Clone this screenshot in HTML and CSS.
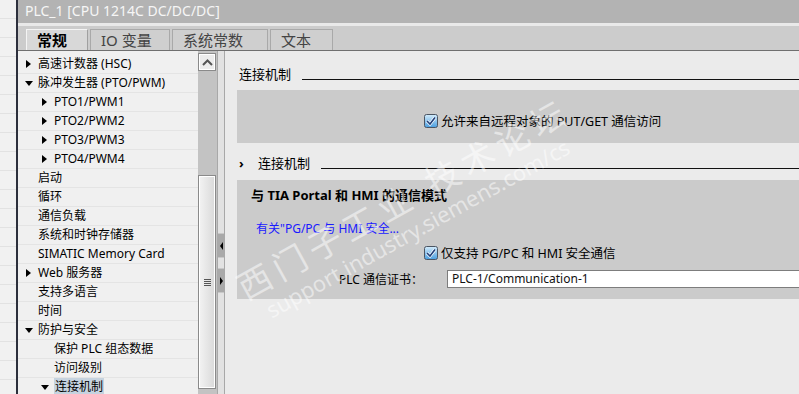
FILE: index.html
```html
<!DOCTYPE html>
<html lang="zh-CN">
<head>
  <meta charset="UTF-8">
  <title>PLC_1 属性</title>
  <link rel="stylesheet" href="styles.css">
</head>
<body>
  <div class="app">
    <div class="side-strip"></div>
    <div class="divider"></div>
    <div class="main">
      <div class="titlebar">PLC_1 [CPU 1214C DC/DC/DC]</div>
      <div class="tabbar">
        <div class="tab active">常规</div>
        <div class="tab">IO 变量</div>
        <div class="tab">系统常数</div>
        <div class="tab">文本</div>
      </div>
      <div class="body">
        <div class="tree">
          <div class="row l0"><span class="arrow right"></span>高速计数器 (HSC)</div>
          <div class="row l0"><span class="arrow down"></span>脉冲发生器 (PTO/PWM)</div>
          <div class="row l1"><span class="arrow right"></span>PTO1/PWM1</div>
          <div class="row l1"><span class="arrow right"></span>PTO2/PWM2</div>
          <div class="row l1"><span class="arrow right"></span>PTO3/PWM3</div>
          <div class="row l1"><span class="arrow right"></span>PTO4/PWM4</div>
          <div class="row l0"><span class="arrow"></span>启动</div>
          <div class="row l0"><span class="arrow"></span>循环</div>
          <div class="row l0"><span class="arrow"></span>通信负载</div>
          <div class="row l0"><span class="arrow"></span>系统和时钟存储器</div>
          <div class="row l0"><span class="arrow"></span>SIMATIC Memory Card</div>
          <div class="row l0"><span class="arrow right"></span>Web 服务器</div>
          <div class="row l0"><span class="arrow"></span>支持多语言</div>
          <div class="row l0"><span class="arrow"></span>时间</div>
          <div class="row l0"><span class="arrow down"></span>防护与安全</div>
          <div class="row l1"><span class="arrow"></span>保护 PLC 组态数据</div>
          <div class="row l1"><span class="arrow"></span>访问级别</div>
          <div class="row l1"><span class="arrow down"></span><span class="selected">连接机制</span></div>
        </div>

        <div class="scrollbar">
          <div class="scroll-up">
            <svg width="11" height="7" viewBox="0 0 11 7"><path d="M1 6 L5.5 1.5 L10 6" fill="none" stroke="#555" stroke-width="2"/></svg>
          </div>
          <div class="scroll-track"></div>
          <div class="scroll-thumb">
            <div class="grip"><span></span><span></span><span></span><span></span></div>
          </div>
        </div>

        <div class="splitter">
          <div class="split-btn"><span class="tri-left"></span></div>
          <div class="split-btn"><span class="tri-right"></span></div>
        </div>

        <div class="content">
          <div class="section-head">
            <span class="head-text">连接机制</span>
            <span class="head-line"></span>
          </div>
          <div class="panel panel-putget">
            <div class="check-row">
              <span class="checkbox">
                <svg width="14" height="14" viewBox="0 0 14 14">
                  <defs>
                    <linearGradient id="cb1" x1="0" y1="0" x2="0" y2="1">
                      <stop offset="0" stop-color="#d4ecfb"/>
                      <stop offset="1" stop-color="#4a9ee0"/>
                    </linearGradient>
                  </defs>
                  <rect x="0.5" y="0.5" width="13" height="13" rx="2" fill="url(#cb1)" stroke="#4b5563"/>
                  <path d="M3 7 L6 10 L11 3.5" fill="none" stroke="#fff" stroke-width="3"/>
                  <path d="M3 7 L6 10 L11 3.5" fill="none" stroke="#1f3f7a" stroke-width="1.6"/>
                </svg>
              </span>
              <span>允许来自远程对象的 PUT/GET 通信访问</span>
            </div>
          </div>

          <div class="section-head sub">
            <span class="chevron">›</span>
            <span class="head-text">连接机制</span>
            <span class="head-line"></span>
          </div>
          <div class="panel panel-hmi">
            <div class="panel-title">与 TIA Portal 和 HMI 的通信模式</div>
            <div class="link">有关"PG/PC 与 HMI 安全...</div>
            <div class="check-row">
              <span class="checkbox">
                <svg width="14" height="14" viewBox="0 0 14 14">
                  <defs>
                    <linearGradient id="cb2" x1="0" y1="0" x2="0" y2="1">
                      <stop offset="0" stop-color="#d4ecfb"/>
                      <stop offset="1" stop-color="#4a9ee0"/>
                    </linearGradient>
                  </defs>
                  <rect x="0.5" y="0.5" width="13" height="13" rx="2" fill="url(#cb2)" stroke="#4b5563"/>
                  <path d="M3 7 L6 10 L11 3.5" fill="none" stroke="#fff" stroke-width="3"/>
                  <path d="M3 7 L6 10 L11 3.5" fill="none" stroke="#1f3f7a" stroke-width="1.6"/>
                </svg>
              </span>
              <span>仅支持 PG/PC 和 HMI 安全通信</span>
            </div>
            <div class="cert-row">
              <label class="cert-label">PLC 通信证书：</label>
              <div class="cert-input">PLC-1/Communication-1</div>
            </div>
          </div>

          <div class="watermark">
            <div class="wm-big">西门子工业 技术论坛</div>
            <div class="wm-small">support.industry.siemens.com/cs</div>
          </div>
        </div>
      </div>
    </div>
  </div>
</body>
</html>
```

FILE: styles.css
```css
body {
  margin: 0;
  padding: 0;
  width: 799px;
  height: 394px;
  overflow: hidden;
  background: #ebebeb;
  font-family: "Noto Sans", "Noto Sans CJK SC", sans-serif;
  font-size: 12px;
  color: #000;
}

.app {
  display: flex;
  height: 394px;
}

.side-strip {
  width: 16px;
  background: repeating-linear-gradient(#f1f1f1 0, #f1f1f1 18px, #e2e2e2 18px, #e2e2e2 19px);
}

.divider {
  width: 2px;
  background: #2c2f3c;
}

.main {
  flex: 1;
  display: flex;
  flex-direction: column;
  min-width: 0;
}

.titlebar {
  height: 23px;
  line-height: 22px;
  background: #b3b3b3;
  color: #f6f6f6;
  font-size: 14px;
  padding-left: 7px;
  white-space: nowrap;
}

.tabbar {
  height: 24px;
  border-top: 3px solid #e9e9e9;
  border-bottom: 1px solid #6f6f6f;
  background: #cccccc;
  display: flex;
  align-items: flex-end;
  padding-left: 8px;
  gap: 2px;
}

.tab {
  height: 20px;
  line-height: 20px;
  padding: 0 0 0 10px;
  font-size: 15px;
  color: #444;
  border: 1px solid #a9a9a9;
  border-bottom: none;
  background: #cfcfcf;
  white-space: nowrap;
}

.tab:nth-child(1) { width: 50px; }
.tab:nth-child(2) { width: 68px; }
.tab:nth-child(3) { width: 84px; }
.tab:nth-child(4) { width: 51px; }

.tab.active {
  color: #000;
  font-weight: bold;
  background: #d8d8d8;
  border-color: #f4f4f4 #a0a0a0 #a0a0a0 #f4f4f4;
}

.body {
  flex: 1;
  display: flex;
  min-height: 0;
  position: relative;
}

/* left tree */
.tree {
  width: 180px;
  padding-top: 4px;
  background: #f0f0f0;
}

.row {
  height: 18px;
  line-height: 18px;
  border-bottom: 1px solid #e4e4e4;
  display: flex;
  align-items: center;
  white-space: nowrap;
}

.row.l0 { padding-left: 6px; }
.row.l1 { padding-left: 22px; }

.arrow {
  width: 14px;
  height: 18px;
  position: relative;
  flex-shrink: 0;
}

.arrow.right::before {
  content: "";
  position: absolute;
  left: 2px;
  top: 5px;
  border-left: 5px solid #000;
  border-top: 4px solid transparent;
  border-bottom: 4px solid transparent;
}

.arrow.down::before {
  content: "";
  position: absolute;
  left: 1px;
  top: 7px;
  border-top: 5px solid #000;
  border-left: 4px solid transparent;
  border-right: 4px solid transparent;
}

.selected {
  background: #c6d3df;
  padding: 0 1px;
}

/* scrollbar */
.scrollbar {
  width: 19px;
  background: #c3c3c3;
  display: flex;
  flex-direction: column;
  padding-top: 2px;
}

.scroll-up {
  height: 16px;
  margin: 0 1px 0 0;
  background: #ececec;
  border: 1px solid #8a8a8a;
  box-shadow: inset 0 0 0 1px #fff;
  display: flex;
  align-items: center;
  justify-content: center;
}

.scroll-track {
  height: 104px;
}

.scroll-thumb {
  height: 212px;
  margin-right: 1px;
  border: 1px solid #8a8a8a;
  box-shadow: inset 0 0 0 1px #fff;
  background: linear-gradient(90deg, #f3f3f3, #d9d9d9);
  display: flex;
  align-items: center;
  justify-content: center;
}

.grip {
  display: flex;
  flex-direction: column;
  gap: 1px;
}

.grip span {
  display: block;
  width: 7px;
  height: 1px;
  background: #555;
}

/* splitter */
.splitter {
  width: 6px;
  background: #e2e2e2;
  border-left: 1px solid #a8a8a8;
  border-right: 1px solid #a8a8a8;
  display: flex;
  flex-direction: column;
  padding-top: 182px;
  gap: 10px;
}

.split-btn {
  height: 23px;
  background: #a9a9a9;
  border-top: 1px solid #c8c8c8;
  border-bottom: 1px solid #c8c8c8;
  display: flex;
  align-items: center;
  justify-content: center;
}

.tri-left {
  border-right: 3px solid #000;
  border-top: 4px solid transparent;
  border-bottom: 4px solid transparent;
}

.tri-right {
  border-left: 3px solid #000;
  border-top: 4px solid transparent;
  border-bottom: 4px solid transparent;
}

/* content */
.content {
  flex: 1;
  padding: 14px 0 0 12px;
  position: relative;
  overflow: hidden;
}

.section-head {
  display: flex;
  align-items: center;
  height: 17px;
  padding-left: 2px;
  font-size: 13px;
}

.head-text {
  white-space: nowrap;
}

.head-line {
  flex: 1;
  height: 1px;
  background: #111;
  margin-left: 11px;
  margin-top: 11px;
}

.section-head.sub {
  margin-top: 11px;
}

.chevron {
  width: 19px;
  font-weight: bold;
  font-size: 13px;
}

.panel {
  background: #cbcbcb;
  margin-top: 8px;
}

.panel-putget {
  height: 53px;
  padding-left: 187px;
  display: flex;
  align-items: center;
}

.panel-hmi {
  height: 119px;
  margin-top: 9px;
}

.check-row {
  display: flex;
  align-items: center;
  gap: 3px;
  white-space: nowrap;
  font-size: 12.5px;
}

.panel-putget .check-row {
  margin-top: 8px;
}

.checkbox {
  display: flex;
}

.panel-title {
  font-size: 13px;
  font-weight: bold;
  padding: 5px 0 0 14px;
  height: 21px;
}

.link {
  color: #1a1aff;
  padding: 15px 0 0 19px;
  height: 16px;
  line-height: 16px;
}

.panel-hmi .check-row {
  margin: 6px 0 0 187px;
}

.cert-row {
  display: grid;
  grid-template-columns: 210px 1fr;
  align-items: center;
  margin-top: 8px;
}

.cert-label {
  text-align: right;
  padding-right: 24px;
  white-space: nowrap;
}

.cert-input {
  height: 16px;
  line-height: 16px;
  background: #fff;
  border: 1px solid #7d7d7d;
  border-right: none;
  padding-left: 4px;
  color: #111;
}

.watermark {
  position: absolute;
  left: 2px;
  top: 216px;
  transform: rotate(-29deg);
  transform-origin: left top;
  color: rgba(255, 255, 255, 0.5);
  white-space: nowrap;
  pointer-events: none;
}

.wm-big {
  font-size: 34px;
  letter-spacing: 6px;
}

.wm-small {
  font-size: 22px;
  margin-top: -6px;
  margin-left: 14px;
}
```
